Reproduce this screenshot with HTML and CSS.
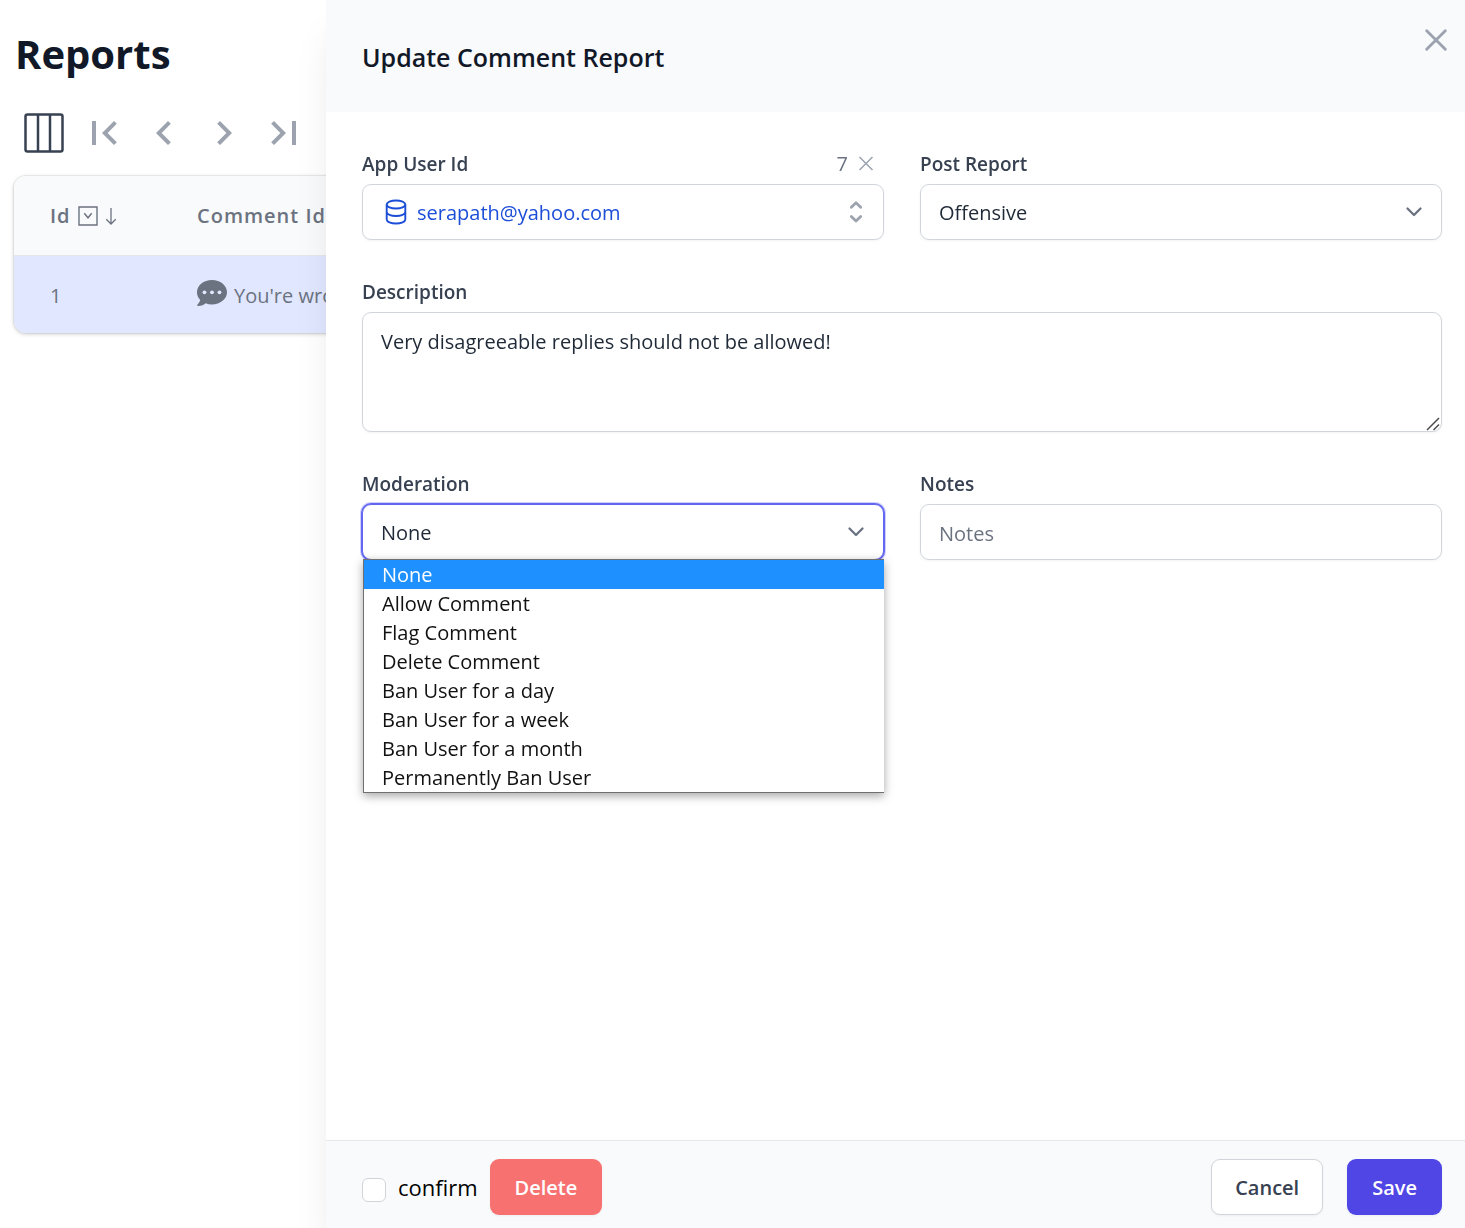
FILE: index.html
```html
<!DOCTYPE html>
<html lang="en">
<head>
<meta charset="utf-8">
<meta name="viewport" content="width=device-width, initial-scale=1">
<title>Reports</title>
<link rel="stylesheet" href="styles.css">
</head>
<body>
<main class="page">
  <h1 class="page-title">Reports</h1>
  <div class="toolbar">
    <button class="icon-button columns-button" type="button" aria-label="Columns">
      <svg width="40" height="40" viewBox="0 0 40 40" fill="none" stroke="currentColor" stroke-width="2.500"><rect x="1.500" y="1.500" width="37" height="37" rx="2"/><path d="M14 2v36M26 2v36"/></svg>
    </button>
    <button class="icon-button" type="button" aria-label="First page">
      <svg width="48" height="48" viewBox="0 0 24 24" fill="currentColor"><path d="M18.410 16.590 13.820 12l4.590-4.590L17 6l-6 6 6 6zM6 6h2v12H6z"/></svg>
    </button>
    <button class="icon-button" type="button" aria-label="Previous page">
      <svg width="48" height="48" viewBox="0 0 24 24" fill="currentColor"><path d="M15.410 7.410 14 6l-6 6 6 6 1.410-1.410L10.830 12z"/></svg>
    </button>
    <button class="icon-button" type="button" aria-label="Next page">
      <svg width="48" height="48" viewBox="0 0 24 24" fill="currentColor"><path d="M10 6 8.590 7.410 13.170 12l-4.580 4.590L10 18l6-6z"/></svg>
    </button>
    <button class="icon-button" type="button" aria-label="Last page">
      <svg width="48" height="48" viewBox="0 0 24 24" fill="currentColor"><path d="M5.590 7.410 10.180 12l-4.590 4.590L7 18l6-6-6-6zM16 6h2v12h-2z"/></svg>
    </button>
  </div>
  <div class="table-card">
    <table class="report-table">
      <thead>
        <tr>
          <th class="id-cell" scope="col">
            <span class="cell-line">Id
              <svg width="20" height="20" viewBox="0 0 20 20" fill="none" stroke="currentColor" stroke-width="1.400"><path d="M1 1h18v18H1z"/><path d="m6.300 7.200 3.700 4.600 3.700-4.600"/></svg>
              <svg width="12" height="20" viewBox="0 0 12 20" fill="none" stroke="currentColor" stroke-width="1.300"><path d="M6 2v16M1.300 13.200 6 18l4.700-4.800"/></svg>
            </span>
          </th>
          <th scope="col">Comment Id</th>
        </tr>
      </thead>
      <tbody>
        <tr>
          <td class="id-cell">1</td>
          <td>
            <span class="cell-line">
              <svg class="comment-icon" width="30" height="27" viewBox="0 0 30 27"><path fill="currentColor" d="M15 0C6.700 0 0 5.400 0 12.200c0 3 1.200 5.600 3.200 7.800-.6 2.500-2.700 4.700-2.800 4.800-.5.500-.2 1.300.5 1.300 3.600 0 6.300-1.700 7.800-2.900 2 .8 4.100 1.200 6.300 1.200 8.300 0 15-5.500 15-12.200S23.300 0 15 0z"/><g fill="#e0e7ff"><circle cx="7.500" cy="12.300" r="1.900"/><circle cx="15" cy="12.300" r="1.900"/><circle cx="22.500" cy="12.300" r="1.900"/></g></svg>
              You're wrong
            </span>
          </td>
        </tr>
      </tbody>
    </table>
  </div>
</main>

<aside class="drawer" aria-labelledby="drawer-title">
  <header class="drawer-header">
    <h2 class="drawer-title" id="drawer-title">Update Comment Report</h2>
    <button class="icon-button" type="button" aria-label="Close">
      <svg width="36" height="36" viewBox="0 0 24 24" fill="none" stroke="currentColor" stroke-width="1.900" stroke-linecap="round"><path d="M5.800 5.800l12.400 12.400M18.200 5.800 5.800 18.200"/></svg>
    </button>
  </header>

  <form class="drawer-form" id="report-form">
    <div class="field">
      <div class="label-row">
        <label for="app-user">App User Id</label>
        <span class="user-id">7
          <button class="icon-button" type="button" aria-label="Clear user">
            <svg width="16" height="16" viewBox="0 0 16 16" fill="none" stroke="currentColor" stroke-width="1.500"><path d="m1.500 1 13 13M14.500 1l-13 13"/></svg>
          </button>
        </span>
      </div>
      <div class="control user-picker">
        <svg class="user-icon" width="24" height="26" viewBox="0 0 24 26" fill="none" stroke="currentColor" stroke-width="1.900"><ellipse cx="12" cy="5.500" rx="9.300" ry="4"/><path d="M2.700 5.500v15c0 2.200 4.200 4 9.300 4s9.300-1.800 9.300-4v-15M2.700 13c0 2.200 4.200 4 9.300 4s9.300-1.800 9.300-4"/></svg>
        <input class="user-input" id="app-user" type="text" value="serapath@yahoo.com">
        <button class="icon-button" type="button" aria-label="Show users">
          <svg width="16" height="24" viewBox="0 0 16 24" fill="none" stroke="currentColor" stroke-width="2.800" stroke-linecap="round" stroke-linejoin="round"><path d="m3.300 7.200 4.700-4.500 4.700 4.500M3.300 16.500 8 21l4.700-4.500"/></svg>
        </button>
      </div>
    </div>

    <div class="field">
      <label for="post-report">Post Report</label>
      <div class="control-wrap">
        <select class="control" id="post-report"><option>Offensive</option></select>
        <svg class="chevron" width="18" height="12" viewBox="0 0 18 12" fill="none" stroke="currentColor" stroke-width="2.300" stroke-linecap="round" stroke-linejoin="round"><path d="m2.500 2.500 6.500 6.500 6.500-6.500"/></svg>
      </div>
    </div>

    <div class="field field-wide">
      <label for="description">Description</label>
      <div class="control-wrap">
        <textarea class="control" id="description">Very disagreeable replies should not be allowed!</textarea>
        <svg class="grip" width="14" height="14" viewBox="0 0 14 14" fill="none" stroke="#4b4b4b" stroke-width="1.500"><path d="M1 13 13 1M7.500 13 13 7.500"/></svg>
      </div>
    </div>

    <div class="field">
      <label for="moderation">Moderation</label>
      <div class="control-wrap">
        <select class="control control-active" id="moderation">
          <option>None</option><option>Allow Comment</option><option>Flag Comment</option><option>Delete Comment</option><option>Ban User for a day</option><option>Ban User for a week</option><option>Ban User for a month</option><option>Permanently Ban User</option>
        </select>
        <svg class="chevron" width="18" height="12" viewBox="0 0 18 12" fill="none" stroke="currentColor" stroke-width="2.300" stroke-linecap="round" stroke-linejoin="round"><path d="m2.500 2.500 6.500 6.500 6.500-6.500"/></svg>
        <ul class="menu" role="listbox" aria-label="Moderation">
          <li class="menu-item menu-item-selected" role="option" aria-selected="true">None</li>
          <li class="menu-item" role="option">Allow Comment</li>
          <li class="menu-item" role="option">Flag Comment</li>
          <li class="menu-item" role="option">Delete Comment</li>
          <li class="menu-item" role="option">Ban User for a day</li>
          <li class="menu-item" role="option">Ban User for a week</li>
          <li class="menu-item" role="option">Ban User for a month</li>
          <li class="menu-item" role="option">Permanently Ban User</li>
        </ul>
      </div>
    </div>

    <div class="field">
      <label for="notes">Notes</label>
      <input class="control" id="notes" type="text" placeholder="Notes">
    </div>
  </form>

  <footer class="drawer-footer">
    <label class="confirm"><input class="confirm-box" type="checkbox">confirm</label>
    <button class="button button-danger" type="button">Delete</button>
    <span class="spacer"></span>
    <button class="button button-plain" type="button">Cancel</button>
    <button class="button button-primary" type="submit" form="report-form">Save</button>
  </footer>
</aside>
</body>
</html>
```

FILE: styles.css
```css
* { box-sizing: border-box; }

body {
  margin: 0;
  min-height: 100vh;
  overflow: hidden;
  background: #fff;
  color: #111827;
  font: 400 20px/28px "Open Sans", "Noto Sans", sans-serif;
}

button, input, select, textarea { font: inherit; color: inherit; }

.icon-button {
  display: flex;
  padding: 0;
  border: 0;
  background: none;
  color: #9ca3af;
  cursor: pointer;
}

/* Report list */
.page { padding: 24px 12px; }

.page-title {
  margin: 0 3px;
  font-size: 40px;
  line-height: 60px;
  font-weight: 700;
}

.toolbar {
  display: flex;
  align-items: center;
  gap: 12px;
  padding: 25px 12px 19px;
}

.columns-button { margin-right: 4px; color: #374151; }

.table-card {
  margin: 0 2px;
  overflow: hidden;
  border-radius: 12px;
  box-shadow: 0 0 0 1px rgb(0 0 0 / 5%), 0 1px 4px rgb(0 0 0 / 20%);
}

.report-table {
  width: 100%;
  border-collapse: collapse;
  color: #6b7280;
  text-align: left;
  white-space: nowrap;
}

.report-table th {
  height: 79px;
  padding: 2px 36px 0 0;
  border-bottom: 1px solid #e5e7eb;
  background: #f9fafb;
  font-weight: 600;
  letter-spacing: 1px;
}

.report-table td {
  height: 78px;
  padding: 3px 36px 0 0;
  background: #e0e7ff;
}

.report-table .id-cell { width: 183px; padding-left: 36px; }
.cell-line { display: flex; align-items: center; gap: 7px; }
.comment-icon { margin-bottom: 4px; }

/* Drawer over the list */
.drawer {
  position: fixed;
  inset: 0 0 0 326px;
  display: flex;
  flex-direction: column;
  background: #fff;
  box-shadow: 0 30px 38px -8px rgb(0 0 0 / 10%), 0 12px 15px -9px rgb(0 0 0 / 10%);
}

.drawer-header {
  display: flex;
  justify-content: space-between;
  align-items: flex-start;
  padding: 22px 11px 36px 36px;
  background: #f9fafb;
}

.drawer-title {
  margin: 16px 0 0;
  font-size: 25px;
  line-height: 38px;
  font-weight: 600;
}

.drawer-form {
  flex: 1;
  display: grid;
  grid-template-columns: 1fr 1fr;
  align-content: start;
  gap: 40px 36px;
  padding: 40px 23px 40px 36px;
}

.field { display: flex; flex-direction: column; gap: 8px; min-width: 0; }
.field-wide { grid-column: 1 / -1; }
.field label { color: #374151; font-size: 19px; font-weight: 600; line-height: 24px; }

.label-row { display: flex; justify-content: space-between; padding-right: 10px; }
.user-id { display: flex; align-items: center; gap: 10px; color: #6b7280; line-height: 24px; }

.control {
  display: block;
  width: 100%;
  height: 56px;
  padding: 2px 18px 0;
  border: 1px solid #d1d5db;
  border-radius: 9px;
  outline: 0;
  background: #fff;
  box-shadow: 0 1px 3px rgb(0 0 0 / 5%);
  color: #1f2937;
  appearance: none;
}

.control::placeholder { color: #6b7280; opacity: 1; }
textarea.control { height: 120px; padding: 15px 18px; resize: vertical; }
textarea::-webkit-resizer { background: transparent; }
.control-active { border-color: #6366f1; box-shadow: 0 0 0 1px #6366f1, 0 0 0 2px rgb(99 102 241 / 30%); }

.user-picker { display: flex; align-items: center; padding: 0 19px 0 21px; }
.user-icon { color: #1d4ed8; }
.user-input { flex: 1; min-width: 0; padding: 2px 0 0 9px; border: 0; outline: 0; background: none; color: #1d4ed8; }

.control-wrap { position: relative; }
.chevron { position: absolute; top: 22px; right: 19px; color: #6b7280; pointer-events: none; }
.grip { position: absolute; right: 2px; bottom: 1px; pointer-events: none; }

.menu {
  position: absolute;
  top: 55px;
  left: 1px;
  right: 0;
  margin: 0;
  padding: 0;
  border: 1px solid #707070;
  border-right: 0;
  background: #fff;
  box-shadow: 0 3px 9px rgb(0 0 0 / 35%);
  list-style: none;
  color: #111;
}

.menu-item { padding: 1px 18px 0; line-height: 28px; }
.menu-item-selected { background: #1e90ff; color: #fff; }

.drawer-footer {
  display: flex;
  align-items: center;
  padding: 18px 23px 13px 36px;
  border-top: 1px solid #e5e7eb;
  background: #f9fafb;
}

.confirm { display: flex; align-items: center; gap: 12px; margin-right: 12px; font-size: 22px; color: #000; }
.confirm-box { width: 24px; height: 24px; margin: 6px 0 0; border: 1px solid #d1d5db; border-radius: 6px; background: #fff; appearance: none; }
.spacer { flex: 1; }

.button {
  height: 56px;
  padding: 2px 24px 0;
  border: 1px solid transparent;
  border-radius: 9px;
  box-shadow: 0 1px 3px rgb(0 0 0 / 5%);
  font-weight: 600;
  cursor: pointer;
}

.button-danger { background: #f87171; color: #fff; }
.button-plain { margin-right: 24px; padding: 2px 23px 0; border-color: #d1d5db; background: #fff; color: #374151; }
.button-primary { background: #4f46e5; color: #fff; }
```
